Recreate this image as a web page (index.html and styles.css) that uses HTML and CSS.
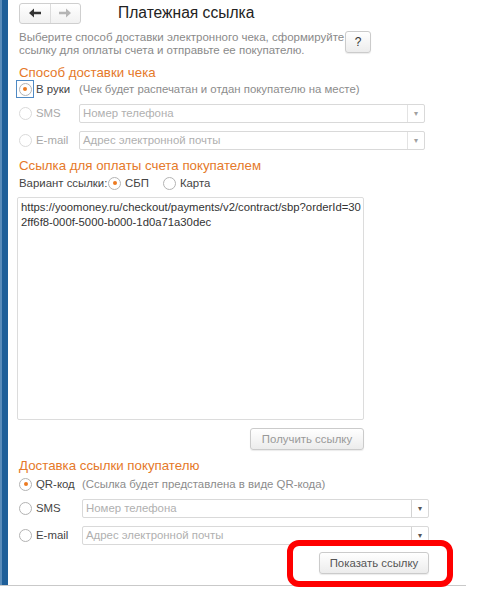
FILE: index.html
```html
<!DOCTYPE html>
<html lang="ru">
<head>
    <meta charset="UTF-8">
    <meta name="viewport" content="width=device-width, initial-scale=1.0">
    <title>Платежная ссылка</title>
    <link rel="stylesheet" href="styles.css">
</head>
<body>
    <div class="window">
        <div class="side-bar"></div>
        <div class="form">
            <!-- шапка -->
            <div class="header">
                <div class="nav">
                    <button class="nav-btn">
                        <svg width="12" height="10" viewBox="0 0 12 10"><path d="M0 5 L5 0.5 L5 3.8 L12 3.8 L12 6.2 L5 6.2 L5 9.5 Z" fill="#333"/></svg>
                    </button>
                    <button class="nav-btn">
                        <svg width="12" height="10" viewBox="0 0 12 10"><path d="M12 5 L7 0.5 L7 3.8 L0 3.8 L0 6.2 L7 6.2 L7 9.5 Z" fill="#b5b5b5"/></svg>
                    </button>
                </div>
                <h1 class="title">Платежная ссылка</h1>
            </div>

            <div class="intro">
                <p>Выберите способ доставки электронного чека, сформируйте<br>ссылку для оплаты счета и отправьте ее покупателю.</p>
                <button class="btn help">?</button>
            </div>

            <!-- Способ доставки чека -->
            <h2 class="group-title">Способ доставки чека</h2>
            <div class="row row-first">
                <span class="radio-focus"><span class="radio checked"></span></span>
                <span class="label">В руки</span>
                <span class="hint">(Чек будет распечатан и отдан покупателю на месте)</span>
            </div>
            <div class="row row-field">
                <span class="radio disabled"></span>
                <span class="label label-top muted">SMS</span>
                <div class="field field-top"><span class="placeholder">Номер телефона</span><span class="drop">&#9662;</span></div>
            </div>
            <div class="row row-field">
                <span class="radio disabled"></span>
                <span class="label label-top muted">E-mail</span>
                <div class="field field-top"><span class="placeholder">Адрес электронной почты</span><span class="drop">&#9662;</span></div>
            </div>

            <!-- Ссылка для оплаты -->
            <h2 class="group-title">Ссылка для оплаты счета покупателем</h2>
            <div class="row row-variant">
                <span class="label">Вариант ссылки:</span>
                <span class="radio checked"></span>
                <span class="label">СБП</span>
                <span class="radio"></span>
                <span class="label">Карта</span>
            </div>
            <div class="link-box">
                <div class="link-text">https://yoomoney.ru/checkout/payments/v2/contract/sbp?orderId=302ff6f8-000f-5000-b000-1d0a71a30dec</div>
                <button class="btn btn-get">Получить ссылку</button>
            </div>

            <!-- Доставка ссылки -->
            <h2 class="group-title">Доставка ссылки покупателю</h2>
            <div class="row row-qr">
                <span class="radio checked"></span>
                <span class="label label-bottom">QR-код</span>
                <span class="hint">(Ссылка будет представлена в виде QR-кода)</span>
            </div>
            <div class="row row-field">
                <span class="radio"></span>
                <span class="label label-bottom">SMS</span>
                <div class="field field-bottom"><span class="placeholder">Номер телефона</span><span class="drop dark">&#9662;</span></div>
            </div>
            <div class="row row-field">
                <span class="radio"></span>
                <span class="label label-bottom">E-mail</span>
                <div class="field field-bottom"><span class="placeholder">Адрес электронной почты</span><span class="drop dark">&#9662;</span></div>
            </div>

            <div class="footer">
                <button class="btn btn-show">Показать ссылку</button>
            </div>
        </div>
    </div>
    <div class="highlight"></div>
</body>
</html>
```

FILE: styles.css
```css
body {
    margin: 0;
    font-family: 'Liberation Sans', Arial, sans-serif;
    background-color: #ffffff;
    color: #444;
    font-size: 11.4px;
    position: relative;
    width: 480px;
    height: 593px;
    overflow: hidden;
}

.window {
    display: flex;
    width: 466px;
    height: 585px;
    border-bottom: 1px solid #c9c9c9;
}

.side-bar {
    width: 8px;
    background-color: #1f5f99;
    border-left: 2px solid #5a8cba;
    box-sizing: border-box;
}

.form {
    flex: 1;
    padding-left: 11px;
    display: flex;
    flex-direction: column;
}

.header {
    display: flex;
    align-items: center;
    height: 20px;
    margin-top: 3px;
}

.nav {
    display: flex;
    width: 60px;
    height: 19px;
    border: 1px solid #cfcfcf;
    border-radius: 3px;
    background: linear-gradient(#ffffff, #f1f1f1);
}

.nav-btn {
    flex: 1;
    border: none;
    background: none;
    padding: 0;
    display: flex;
    align-items: center;
    justify-content: center;
}

.nav-btn + .nav-btn {
    border-left: 1px solid #dcdcdc;
}

.title {
    font-size: 15.6px;
    font-weight: normal;
    color: #222;
    margin: 0 0 0 37px;
}

.intro {
    display: flex;
    margin-top: 8px;
    height: 26px;
}

.intro p {
    margin: 0;
    color: #8a8a8a;
    font-size: 11.5px;
    line-height: 13px;
    width: 326px;
}

.btn {
    font-family: inherit;
    border: 1px solid #cbcbcb;
    border-radius: 3px;
    background: linear-gradient(#ffffff, #ececec);
    color: #555;
    font-size: 11.4px;
    padding: 0;
    box-shadow: 0 1px 1px rgba(0, 0, 0, 0.08);
}

.help {
    width: 26px;
    height: 22px;
    margin-top: 0;
    color: #333;
    font-size: 12px;
}

.group-title {
    font-size: 13.3px;
    font-weight: normal;
    color: #e5792a;
    margin: 8px 0 0 0;
    line-height: 16px;
    height: 16px;
}

.row {
    display: flex;
    align-items: center;
    height: 16px;
}

.row-field {
    height: 20px;
    margin-top: 7px;
}

.row-first + .row-field,
.row-qr + .row-field {
    margin-top: 6px;
}

.row-variant {
    margin-top: 1px;
}

.row-qr {
    margin-top: 2px;
}

.radio {
    width: 11px;
    height: 11px;
    border: 1px solid #b3b3b3;
    border-radius: 50%;
    background: #fff;
    display: inline-flex;
    align-items: center;
    justify-content: center;
    flex-shrink: 0;
}

.radio.disabled {
    border-color: #dadada;
}

.radio.checked::after {
    content: "";
    width: 4px;
    height: 4px;
    border-radius: 50%;
    background: #ec7a20;
}

.radio-focus {
    width: 16px;
    height: 16px;
    border: 1px solid #4f8ac4;
    margin-left: -3px;
    display: inline-flex;
    align-items: center;
    justify-content: center;
    flex-shrink: 0;
}

.label {
    margin-left: 4px;
    color: #444;
    white-space: nowrap;
}

.row-first .label {
    margin-left: 2px;
    width: 43px;
}

.row-variant .label:first-child {
    margin-left: 0;
    width: 89px;
}

.row-variant .radio + .label {
    margin-right: 14px;
}

.label-top {
    width: 43px;
}

.label-bottom {
    width: 46px;
}

.muted {
    color: #a8a8a8;
}

.hint {
    color: #8c8c8c;
    white-space: nowrap;
}

.field {
    display: flex;
    height: 19px;
    border: 1px solid #d9d9d9;
    border-radius: 2px;
    box-sizing: border-box;
    align-items: center;
}

.field-top {
    width: 346px;
}

.field-bottom {
    width: 347px;
}

.placeholder {
    flex: 1;
    color: #b0b0b0;
    padding-left: 3px;
    white-space: nowrap;
}

.drop {
    width: 16px;
    height: 100%;
    border-left: 1px solid #e3e3e3;
    color: #a0a0a0;
    font-size: 8px;
    display: flex;
    align-items: center;
    justify-content: center;
}

.drop.dark {
    color: #555;
    border-left-color: #d3d3d3;
}

.link-box {
    display: flex;
    flex-direction: column;
    align-items: flex-end;
    width: 347px;
    margin-left: -2px;
    margin-top: 6px;
}

.link-text {
    width: 100%;
    height: 223px;
    box-sizing: border-box;
    border: 1px solid #dcdcdc;
    border-radius: 2px;
    padding: 2px 0 2px 3px;
    font-size: 11.3px;
    line-height: 15px;
    color: #333;
    word-break: break-all;
}

.btn-get {
    width: 114px;
    height: 22px;
    margin-top: 8px;
    color: #999;
}

.footer {
    display: flex;
    justify-content: flex-end;
    width: 410px;
    margin-top: 7px;
}

.btn-show {
    width: 110px;
    height: 22px;
}

/* красная рамка поверх кнопки */
.highlight {
    position: absolute;
    left: 287px;
    top: 540px;
    width: 166px;
    height: 47px;
    box-sizing: border-box;
    border: 6px solid #ff0000;
    border-radius: 12px;
}
```
